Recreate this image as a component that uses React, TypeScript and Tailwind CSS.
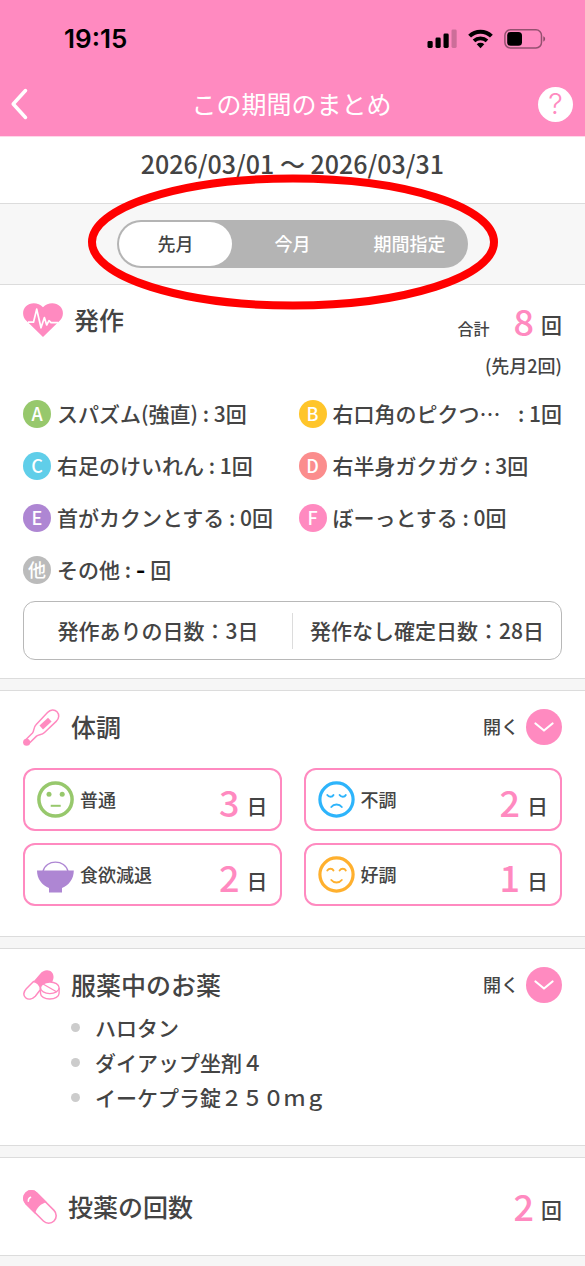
import type { ReactNode } from 'react';

function StatusBar() {
  return (
    <div className="flex h-[78px] items-center justify-between pr-[39px] pl-16 text-black">
      <span className="font-['Inter',sans-serif] text-[26px] leading-8 font-semibold">19:15</span>
      <div className="flex items-center gap-[11px]">
        <svg className="h-5 w-[30px]" viewBox="0 0 30 20" aria-hidden="true">
          <rect x="0.500" y="12" width="5.2" height="7" rx="1.4" />
          <rect x="8.500" y="8.5" width="5.2" height="10.5" rx="1.4" />
          <rect x="16.500" y="4.5" width="5.2" height="14.5" rx="1.4" />
          <rect x="24.500" y="0.5" width="5.2" height="18.5" rx="1.4" opacity="0.2" />
        </svg>
        <svg className="h-5 w-[25px]" viewBox="0 0 25 20" aria-hidden="true">
          <path d="M1.600 7.200a15.4 15.4 0 0 1 21.800 0" fill="none" stroke="black" strokeWidth="4" />
          <path d="M6 11.900a9.5 9.5 0 0 1 13 0" fill="none" stroke="black" strokeWidth="3.700" />
          <path d="M12.5 19.2 8.7 15.3a5.6 5.6 0 0 1 7.6 0Z" />
        </svg>
        <svg className="h-5 w-[42px]" viewBox="0 0 42 20" aria-hidden="true">
          <rect x="0.9" y="0.8" width="36.6" height="18.2" rx="5.5" fill="none" stroke="black" strokeWidth="1.5" opacity="0.42" />
          <rect x="3.2" y="3" width="14.8" height="13.8" rx="3.6" />
          <path d="M39.3 7.2c2.4.8 2.4 4.6 0 5.4Z" opacity="0.45" />
        </svg>
      </div>
    </div>
  );
}

function HeartIcon() {
  return (
    <svg className="h-[34px] w-10" viewBox="0 0 40 34" aria-hidden="true">
      <path d="M20 34 3.1 17.6C-.8 13.6-1 7 3 3.2 7.5-1.3 15.600-.8 20 4.300 24.400-.8 32.500-1.300 37 3.200c4 3.800 3.800 10.400-.1 14.400Z" fill="#ff8ac0" />
      <path d="M5 19.200h5.500l3.200-13 4.300 18.600 3.400-10.200 2.300 7.400 2.300-4.300 2 2h7" fill="none" stroke="white" strokeWidth="1.700" strokeLinejoin="round" />
    </svg>
  );
}

function ThermometerIcon() {
  return (
    <svg className="size-[37px]" viewBox="0 0 37 37" fill="none" aria-hidden="true">
      <path d="M2 31.500 9.500 24c1.800-2.400.8-5.500 3.500-8.200L24.500 3.500C27.500.4 31.500.2 34 2.800s2.300 6.600-.8 9.600L21.500 23.500c-2.800 2.800-5.500 1.800-8 3.600L5.500 35" stroke="#ff8ac0" strokeWidth="1.500" strokeLinejoin="round" />
      <circle cx="3.600" cy="33.300" r="3.500" fill="#ff8ac0" />
      <path d="M16.500 16.600 25 8.700l3.600 3.700-8.600 8.200Z" fill="#ff8ac0" />
    </svg>
  );
}

function PillsIcon() {
  return (
    <svg className="h-[30px] w-[37px]" viewBox="0 0 37 30" fill="none" aria-hidden="true">
      <path d="M10.500 11.500 17 4C20.500-.4 26-.6 28.800 2.300c2.500 2.700 2 6.700.4 9.700-5 0-11 2.200-11.700 7.300Z" fill="#ff8ac0" />
      <path d="M10.500 11.500 3.300 18.700C.2 21.900.1 25.600 2.600 27.700c2.700 2.300 6.700 1.500 9.700-1.500l5.200-6.700c-.1-4.500-3.500-7.500-7-8Z" fill="white" stroke="#ff8ac0" strokeWidth="1.500" />
      <path d="M17.500 18v5.200c0 3.300 4.200 5.800 9.300 5.800s9.300-2.500 9.300-5.800V18" fill="white" stroke="#ff8ac0" strokeWidth="1.400" />
      <ellipse cx="26.800" cy="17.800" rx="9.300" ry="5.800" fill="white" stroke="#ff8ac0" strokeWidth="1.400" />
      <path d="m20 14 13.500 7.700" stroke="#ff8ac0" strokeWidth="1.300" />
    </svg>
  );
}

function CapsuleIcon() {
  return (
    <svg className="size-[34px]" viewBox="0 0 34 34" fill="none" aria-hidden="true">
      <g transform="rotate(45 17 17)">
        <rect x="-2.800" y="9.500" width="39.600" height="15" rx="7.500" fill="white" stroke="#ff8ac0" strokeWidth="1.600" />
        <path d="M18.500 8.700H4.700a8.300 8.300 0 0 0 0 16.600h13.800c-3.500-4.800-3.500-11.800 0-16.600Z" fill="#ff8ac0" />
      </g>
      <path d="M5.300 11.200c0-1.900.7-3.200 2.300-3.900" stroke="white" strokeWidth="1.500" strokeLinecap="round" />
    </svg>
  );
}

function NormalFace() {
  return (
    <svg className="size-[37px]" viewBox="0 0 37 37" fill="none" stroke="#97c86c" aria-hidden="true">
      <circle cx="18.500" cy="18.500" r="16.600" strokeWidth="3.500" />
      <circle cx="12" cy="13.300" r="2.500" fill="#97c86c" stroke="none" />
      <circle cx="25.200" cy="13.300" r="2.500" fill="#97c86c" stroke="none" />
      <path d="M13.700 24.800h10" strokeWidth="2" />
    </svg>
  );
}

function SadFace() {
  return (
    <svg className="size-[37px]" viewBox="0 0 37 37" fill="none" stroke="#2db4fb" strokeLinecap="round" aria-hidden="true">
      <circle cx="18.500" cy="18.500" r="16.600" strokeWidth="3.200" />
      <path d="M9.300 14c1.500 2.300 5 2.300 6.200 0M21.600 14c1.500 2.300 5 2.300 6.200 0M13.300 26c2.500-3.300 8-3.300 10.500 0" strokeWidth="1.900" />
    </svg>
  );
}

function HappyFace() {
  return (
    <svg className="size-[37px]" viewBox="0 0 37 37" fill="none" stroke="#ffb02e" strokeLinecap="round" aria-hidden="true">
      <circle cx="18.500" cy="18.500" r="16.600" strokeWidth="3.200" />
      <path d="M9.300 14.500c1.500-2.300 5-2.300 6.200 0M21.600 14.500c1.500-2.300 5-2.300 6.200 0M13.300 24c2.500 3.300 8 3.300 10.500 0" strokeWidth="1.900" />
    </svg>
  );
}

function BowlIcon() {
  return (
    <svg className="size-[37px]" viewBox="0 0 37 37" aria-hidden="true">
      <path d="M6 15.500C8.500 3 28.500 3 31 15.500" fill="none" stroke="#ae86d3" strokeWidth="1.400" />
      <path d="M0 14.500h36.800C36.800 23 32 29 25 32v4.500H12V32C5 29 0 23 0 14.500Z" fill="#ae86d3" />
    </svg>
  );
}

type Seizure = { mark: string; color: string; name: string; count: string; fill?: boolean };

const seizures: Seizure[] = [
  { mark: 'A', color: 'bg-[#97c86c]', name: 'スパズム(強直)', count: '3回' },
  { mark: 'B', color: 'bg-[#ffc52a]', name: '右口角のピクつ…', count: '1回', fill: true },
  { mark: 'C', color: 'bg-[#60cee9]', name: '右足のけいれん', count: '1回' },
  { mark: 'D', color: 'bg-[#fb8d8d]', name: '右半身ガクガク', count: '3回' },
  { mark: 'E', color: 'bg-[#ae86d3]', name: '首がカクンとする', count: '0回' },
  { mark: 'F', color: 'bg-[#ff8ac0]', name: 'ぼーっとする', count: '0回' },
  { mark: '他', color: 'bg-[#bbbbbb]', name: 'その他', count: '' },
];

const conditions: { icon: ReactNode; label: string; days: number }[] = [
  { icon: <NormalFace />, label: '普通', days: 3 },
  { icon: <SadFace />, label: '不調', days: 2 },
  { icon: <BowlIcon />, label: '食欲減退', days: 2 },
  { icon: <HappyFace />, label: '好調', days: 1 },
];

const medicines = ['ハロタン', 'ダイアップ坐剤４', 'イーケプラ錠２５０ｍｇ'];

function Title({ icon, children }: { icon: ReactNode; children: ReactNode }) {
  return (
    <h2 className="flex items-center gap-[11px] text-[25px] leading-[38px]">
      {icon}
      <span className="pb-0.5">{children}</span>
    </h2>
  );
}

function Count({ value, unit }: { value: number; unit: string }) {
  return (
    <span className="flex items-end gap-[7px]">
      <span className="text-[36px] leading-10 text-[#ff8ac0]">{value}</span>
      <span className="text-[21px] leading-8">{unit}</span>
    </span>
  );
}

function OpenButton({ label }: { label: string }) {
  return (
    <button type="button" aria-label={label} className="flex items-center gap-[7px] text-[18px] leading-6">
      <span className="pb-0.5">開く</span>
      <span className="flex size-9 items-center justify-center rounded-full bg-[#ff8ac0]">
        <svg className="h-2.5 w-5" viewBox="0 0 20 10" fill="none" aria-hidden="true">
          <path d="m1.500 1.500 8.500 7 8.500-7" stroke="white" strokeWidth="2.200" strokeLinecap="round" strokeLinejoin="round" />
        </svg>
      </span>
    </button>
  );
}

function Divider() {
  return <div className="h-[13px] border-y border-[#dcdcdc] bg-[#f6f6f6]" />;
}

export default function App() {
  return (
    <div className="min-h-screen bg-[#f6f6f6] font-['Noto_Sans_CJK_JP',sans-serif] font-medium text-[#444444]">
      <header className="bg-[#ff8ac0] text-white">
        <StatusBar />
        <div className="flex h-[58px] items-start justify-between pr-3 pl-2.5">
          <button type="button" aria-label="戻る" className="flex h-[52px] w-[35px] items-center">
            <svg className="h-8 w-[18px]" viewBox="0 0 18 32" fill="none" aria-hidden="true">
              <path d="M15.500 2.500 3.200 16l12.300 13.500" stroke="white" strokeWidth="3.500" strokeLinecap="round" strokeLinejoin="round" />
            </svg>
          </button>
          <h1 className="text-[25px] leading-[50px] font-normal">この期間のまとめ</h1>
          <button type="button" aria-label="ヘルプ" className="flex h-[52px] items-center">
            <span className="flex size-[35px] items-center justify-center rounded-full bg-white font-['Inter',sans-serif] text-[29px] leading-8 font-light text-[#ff8ac0]">
              ?
            </span>
          </button>
        </div>
      </header>

      <main>
        <p className="border-t border-[#ffd7e9] bg-white pb-3.5 text-center text-[25px] leading-[52px]">
          2026/03/01 ～ 2026/03/31
        </p>

        <div className="relative z-10 flex justify-center border-y border-[#dcdcdc] bg-[#f7f7f7] py-4">
          <div className="flex h-12 w-3/5 rounded-full bg-[#b4b4b4] text-[18px] leading-6 text-white">
            <button type="button" aria-pressed="true" className="m-0.5 flex-1 rounded-full bg-white pb-0.5 text-[#444444]">
              先月
            </button>
            <button type="button" aria-pressed="false" className="m-0.5 flex-1 rounded-full pb-0.5">
              今月
            </button>
            <button type="button" aria-pressed="false" className="m-0.5 flex-1 rounded-full pb-0.5">
              期間指定
            </button>
          </div>
          <svg
            className="pointer-events-none absolute -top-[30px] left-1/2 h-[136px] w-[410px] -translate-x-1/2"
            viewBox="0 0 410 136"
            fill="none"
            aria-hidden="true"
          >
            <ellipse cx="205" cy="68" rx="201" ry="63.500" stroke="red" strokeWidth="8" />
          </svg>
        </div>

        <section className="bg-white px-[23px] pt-[15px] pb-[18px]">
          <div className="flex items-start justify-between">
            <Title icon={<HeartIcon />}>発作</Title>
            <div className="flex flex-col items-end">
              <div className="flex items-end gap-6 text-[16px] leading-6">
                合計
                <Count value={8} unit="回" />
              </div>
              <p className="pt-[9px] text-[18px] leading-8">(先月2回)</p>
            </div>
          </div>

          <ul className="grid grid-cols-2 gap-x-3 pt-[7px] text-[21px]">
            {seizures.map((s) => (
              <li key={s.mark} className="flex h-[52px] items-center gap-1.5">
                <span className={`flex size-7 shrink-0 items-center justify-center rounded-full text-[18px] leading-7 text-white ${s.color}`}>
                  <span className="pb-0.5">{s.mark}</span>
                </span>
                <span className="flex flex-1 whitespace-pre">
                  <span className={s.fill ? 'flex-1' : ''}>{s.name}</span>
                  <span>
                    {' : '}
                    {s.count || (
                      <>
                        <b className="font-['Inter',sans-serif] font-bold text-black">-</b> 回
                      </>
                    )}
                  </span>
                </span>
              </li>
            ))}
          </ul>

          <div className="mt-[5px] flex h-[59px] items-center rounded-xl border border-[#b8b8b8] text-[21px]">
            <p className="flex-1 text-center">発作ありの日数：3日</p>
            <div className="h-9 w-px bg-[#dcdcdc]" />
            <p className="flex-1 text-center">発作なし確定日数：28日</p>
          </div>
        </section>

        <Divider />

        <section className="bg-white px-[23px] pt-4 pb-[30px]">
          <div className="flex h-10 items-center justify-between">
            <Title icon={<ThermometerIcon />}>体調</Title>
            <OpenButton label="体調を開く" />
          </div>
          <ul className="grid grid-cols-2 gap-x-[22px] gap-y-3 pt-[21px]">
            {conditions.map((c) => (
              <li key={c.label} className="flex h-[63px] items-center justify-between rounded-xl border-2 border-[#ff8ac0] px-3">
                <span className="flex items-center gap-1.5 text-[18px] leading-6">
                  {c.icon}
                  <span className="pb-0.5">{c.label}</span>
                </span>
                <span className="pt-[3px]">
                  <Count value={c.days} unit="日" />
                </span>
              </li>
            ))}
          </ul>
        </section>

        <Divider />

        <section className="bg-white px-[23px] pt-4 pb-[30px]">
          <div className="flex h-10 items-center justify-between">
            <Title icon={<PillsIcon />}>服薬中のお薬</Title>
            <OpenButton label="服薬中のお薬を開く" />
          </div>
          <ul className="pt-[5px] pl-12 text-[21px] leading-[35px]">
            {medicines.map((m) => (
              <li key={m} className="flex items-center gap-[15px]">
                <span className="size-[9px] rounded-full bg-[#cccccc]" />
                {m}
              </li>
            ))}
          </ul>
        </section>

        <Divider />

        <section className="flex h-[98px] items-center justify-between border-b border-[#dcdcdc] bg-white px-[23px]">
          <Title icon={<CapsuleIcon />}>投薬の回数</Title>
          <span className="pb-[3px]">
            <Count value={2} unit="回" />
          </span>
        </section>
      </main>
    </div>
  );
}
